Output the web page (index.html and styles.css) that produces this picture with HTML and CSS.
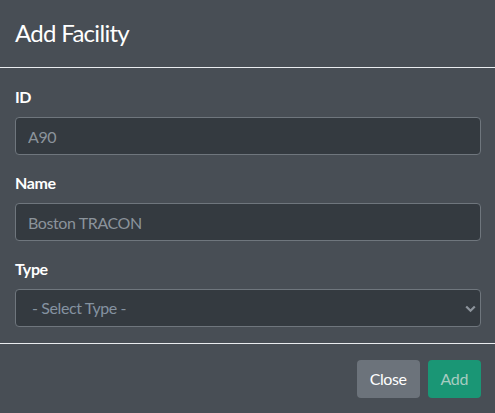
FILE: index.html
```html
<!DOCTYPE html>
<html>
<head>
<meta charset="utf-8">
<link rel="stylesheet" href="styles.css">
</head>
<body>
<div class="modal">
  <div class="modal-header">
    <h4 class="modal-title">Add Facility</h4>
  </div>
  <div class="modal-body">
    <div class="form-group">
      <label class="form-label">ID</label>
      <input class="form-control" type="text" placeholder="A90">
    </div>
    <div class="form-group">
      <label class="form-label">Name</label>
      <input class="form-control" type="text" placeholder="Boston TRACON">
    </div>
    <div class="form-group last">
      <label class="form-label">Type</label>
      <div class="select">
        <span class="select-text">- Select Type -</span>
        <svg class="chevron" width="11" height="8" viewBox="0 0 11 8"><path d="M1.2 1.5 L5.5 5.8 L9.8 1.5" fill="none" stroke="#8d949c" stroke-width="2.2"/></svg>
      </div>
    </div>
  </div>
  <div class="modal-footer">
    <button class="btn btn-secondary">Close</button>
    <button class="btn btn-success" disabled>Add</button>
  </div>
</div>
</body>
</html>
```
FILE: styles.css
```css
* { box-sizing: border-box; }
html, body { margin: 0; padding: 0; }
body {
  background: #484e55;
  font-family: Lato, "Noto Sans", sans-serif;
  font-size: 16px;
  line-height: 1.5;
  letter-spacing: -0.4px;
  color: #fff;
  overflow: hidden;
}
.modal {
  width: 495px;
  background: #484e55;
}
.modal-header {
  padding: 15px 15px 16px;
  border-bottom: 1px solid #e9ecef;
}
.modal-title {
  margin: 0;
  font-size: 24px;
  font-weight: 400;
  line-height: 36px;
  letter-spacing: -0.7px;
  color: #fff;
}
.modal-body {
  padding: 17px 14px 16px 15px;
}
.form-group { margin-bottom: 16px; }
.form-group.last { margin-bottom: 0; }
.form-label {
  display: block;
  font-weight: 700;
  margin-bottom: 8px;
  line-height: 24px;
}
.form-control, .select {
  display: block;
  width: 100%;
  height: 38px;
  padding: 6px 12px;
  font-family: inherit;
  font-size: 16px;
  letter-spacing: -0.4px;
  line-height: 24px;
  color: #fff;
  background: #343a40;
  border: 1px solid #6f767d;
  border-radius: 4px;
  outline: none;
}
.form-control::placeholder { color: #8b939b; opacity: 1; }
.select {
  display: flex;
  align-items: center;
  justify-content: space-between;
  padding: 6px 4px 6px 16px;
}
.select-text { color: #8592a0; }
.chevron { margin-top: 1px; }
.modal-footer {
  border-top: 1px solid #e9ecef;
  padding: 16px 14px 16px 15px;
  display: flex;
  justify-content: flex-end;
  gap: 8px;
}
.btn {
  font-family: inherit;
  font-size: 16px;
  letter-spacing: -0.4px;
  line-height: 24px;
  padding: 6px 12px;
  border: 1px solid transparent;
  border-radius: 4px;
  height: 38px;
}
.btn-secondary { background: #6c737b; color: #fff; }
.btn-success { background: #1a9675; color: #a6ccc1; }
```
